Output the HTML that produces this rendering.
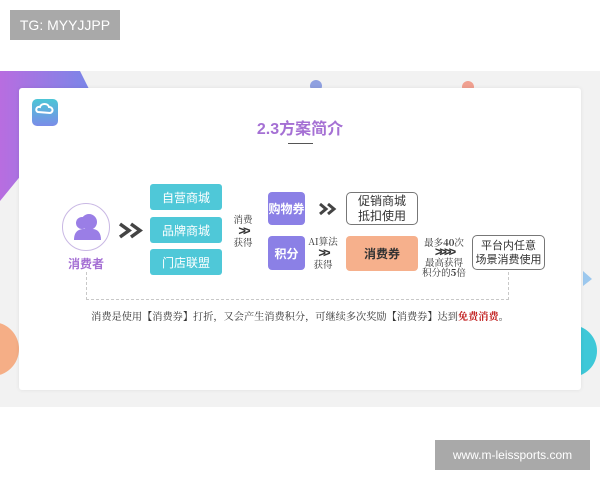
<!DOCTYPE html>
<html><head><meta charset="utf-8"><style>
*{margin:0;padding:0;box-sizing:border-box}
body{width:600px;height:480px;background:#fff;position:relative;overflow:hidden;font-family:"Liberation Sans","Noto Sans CJK SC",sans-serif}
.a{position:absolute}
.band{left:0;top:71px;width:600px;height:336px;background:#f2f2f2}
.card{left:19px;top:88px;width:562px;height:302px;background:#fff;border-radius:3px;box-shadow:0 0 4px rgba(0,0,0,.08)}
.wm{background:#a9a9a9;color:#fff;font-size:14px;display:flex;align-items:center;justify-content:center}
.tb{background:#4fc8d8;color:#fff;font-size:12px;border-radius:3px;display:flex;align-items:center;justify-content:center;width:72px;height:26px;left:150px}
.pb{background:#8b80e6;color:#fff;font-size:12px;font-weight:bold;border-radius:4px;display:flex;align-items:center;justify-content:center;width:37px;left:268px}
.ob{border:1px solid #777;border-radius:5px;background:#fff;color:#333;font-size:12px;line-height:15px;text-align:center;display:flex;align-items:center;justify-content:center}
.sm{font-family:"Noto Serif CJK SC",serif;font-size:9.5px;color:#333;text-align:center;line-height:11px}
.sa{font-family:'Liberation Sans';font-size:13px;font-weight:bold;letter-spacing:-3px}
</style></head><body>
<div class="a band"></div>
<svg class="a" style="left:0;top:71px" width="600" height="336">
<defs><linearGradient id="g" x1="0" x2="1" y1="0" y2="0"><stop offset="0" stop-color="#b86de0"/><stop offset="1" stop-color="#7a86e8"/></linearGradient></defs>
<polygon points="0,0 80,0 90,20 0,130" fill="url(#g)"/>
<circle cx="316" cy="15" r="6" fill="#8fa0e0"/>
<circle cx="468" cy="16" r="6" fill="#f0a090"/>
<circle cx="-8" cy="278" r="27" fill="#f5ae86"/>
<circle cx="571" cy="280" r="26" fill="#3ec8d8"/>
<polygon points="583,200 592,208 583,215" fill="#9cc8ee"/>
</svg>
<div class="a card"></div>
<div class="a" style="left:32px;top:99px;width:26px;height:27px;border-radius:5px;background:linear-gradient(#4cc6d6,#7a8ce8)"></div>
<svg class="a" style="left:34px;top:101px" width="22" height="16"><path d="M4 11c-3-1-2-6 2-5 1-4 8-4 9 0 4 0 5 5 1 6z" fill="none" stroke="#fff" stroke-width="2"/></svg>
<div class="a wm" style="left:10px;top:10px;width:110px;height:30px">TG: MYYJJPP</div>
<div class="a wm" style="left:435px;top:440px;width:155px;height:30px;font-size:12px">www.m-leissports.com</div>
<div class="a" style="left:0;width:600px;top:115px;text-align:center;font-size:16px;font-weight:bold;color:#a570d4">2.3方案简介</div>
<div class="a" style="left:288px;top:143px;width:25px;height:1px;background:#555"></div>
<div class="a" style="left:62px;top:203px;width:48px;height:48px;border-radius:50%;border:1px solid #c9b8e4"></div>
<svg class="a" style="left:70px;top:210px" width="34" height="34"><circle cx="19" cy="12" r="8" fill="#9a7ee6"/><circle cx="12" cy="13" r="6" fill="#9a7ee6"/><path d="M4 30c0-8 4-11 10-11h8c6 0 9 4 9 11z" fill="#9a7ee6"/></svg>
<div class="a" style="left:62px;top:255px;width:48px;text-align:center;font-size:12px;font-weight:bold;color:#a570d4">消费者</div>
<svg class="a" style="left:118px;top:222px" width="26" height="17"><path d="M2 2l9 6.5-9 6.5M13 2l9 6.5-9 6.5" fill="none" stroke="#444" stroke-width="3.5"/></svg>
<div class="a tb" style="top:184px">自营商城</div>
<div class="a tb" style="top:217px">品牌商城</div>
<div class="a tb" style="top:249px">门店联盟</div>
<div class="a sm" style="left:231px;top:214px;width:24px">消费<br><b class="sa">&gt;&gt;</b><br>获得</div>
<div class="a pb" style="top:192px;height:33px">购物券</div>
<div class="a pb" style="top:236px;height:34px">积分</div>
<svg class="a" style="left:318px;top:202px" width="19" height="14"><path d="M2 2l6 5-6 5M10 2l6 5-6 5" fill="none" stroke="#444" stroke-width="3"/></svg>
<div class="a ob" style="left:346px;top:192px;width:72px;height:33px">促销商城<br>抵扣使用</div>
<div class="a sm" style="left:305px;top:236px;width:36px">AI算法<br><b class="sa">&gt;&gt;</b><br>获得</div>
<div class="a" style="left:346px;top:236px;width:72px;height:35px;background:#f6b08c;border-radius:4px;display:flex;align-items:center;justify-content:center;font-size:12px;font-weight:bold;color:#333">消费券</div>
<div class="a sm" style="left:421px;top:237px;width:46px;line-height:10px">最多<b>40</b>次<br><b class="sa">&gt;&gt;&gt;&gt;</b><br>最高获得<br>积分的<b>5</b>倍</div>
<div class="a ob" style="left:472px;top:235px;width:73px;height:35px;font-size:11px;line-height:14px">平台内任意<br>场景消费使用</div>
<div class="a" style="left:86px;top:272px;width:423px;height:28px;border:1px dashed #c8c8c8;border-top:none"></div>
<div class="a" style="left:0;width:600px;top:308px;text-align:center;font-family:'Noto Serif CJK SC',serif;font-size:10.2px;color:#333">消费是使用【消费券】打折，又会产生消费积分，可继续多次奖励【消费券】达到<b style="color:#c01818">免费消费</b>。</div>
</body></html>
